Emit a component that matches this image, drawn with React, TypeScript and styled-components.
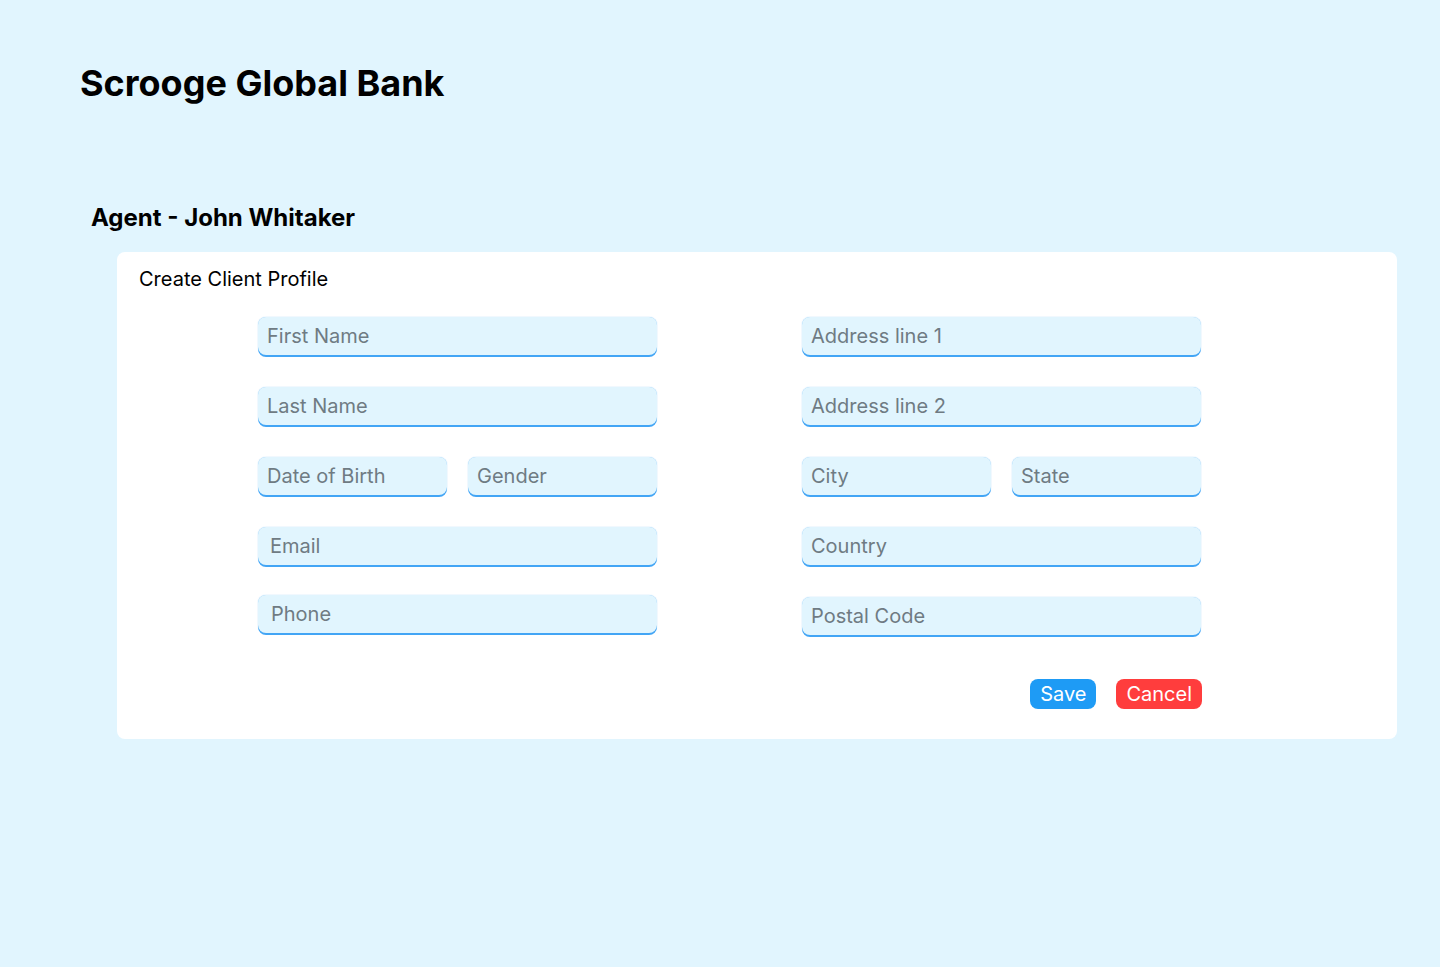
import React from 'react';
import styled, { createGlobalStyle } from 'styled-components';

const GlobalStyle = createGlobalStyle`
	* {
		box-sizing: border-box;
	}
	body {
		margin: 0;
		background: #e1f5fe;
		font-family: Inter, 'Noto Sans', sans-serif;
		color: #000;
	}
`;

const Page = styled.div`
	min-height: 967px;
	padding: 0 43px 0 80px;
`;

const BankTitle = styled.h1`
	font-size: 36px;
	font-weight: 700;
	line-height: 44px;
	margin: 0;
	padding-top: 61px;
`;

const AgentTitle = styled.h2`
	font-size: 24px;
	font-weight: 700;
	line-height: 30px;
	margin: 98px 0 0 11px;
`;

const Card = styled.section`
	background: #fff;
	border-radius: 8px;
	margin: 19px 0 0 37px;
	padding: 15px 22px 30px;
`;

const CardTitle = styled.h3`
	font-size: 20px;
	font-weight: 400;
	line-height: 24px;
	margin: 0;
`;

const FormGrid = styled.div`
	display: grid;
	grid-template-columns: 399px 399px;
	column-gap: 145px;
	margin: 26px 0 0 119px;
`;

const Column = styled.div`
	display: flex;
	flex-direction: column;
	gap: 32px;
`;

const Pair = styled.div`
	display: grid;
	grid-template-columns: 1fr 1fr;
	gap: 21px;
`;

const Field = styled.input<{ $inset?: number; $lift?: number }>`
	width: 100%;
	height: 38px;
	border: none;
	border-radius: 8px;
	background: #e1f5fe;
	box-shadow: 0 2px 0 #42a5f5, 0 0 1px rgba(66, 165, 245, 0.7);
	padding: 0 0 0 ${(p) => p.$inset ?? 9}px;
	margin-top: ${(p) => -(p.$lift ?? 0)}px;
	font-family: Inter, 'Noto Sans', sans-serif;
	font-size: 20px;
	color: #37474f;
	outline: none;
	&::placeholder {
		color: #6f7b83;
	}
`;

const Actions = styled.div`
	display: flex;
	justify-content: flex-end;
	gap: 20px;
	width: 944px;
	margin: 44px 0 0 119px;
`;

const Button = styled.button<{ $tone: 'save' | 'cancel' }>`
	height: 30px;
	border: none;
	border-radius: 8px;
	padding: 0 10px;
	font-family: Inter, 'Noto Sans', sans-serif;
	font-size: 20px;
	line-height: 30px;
	color: #fff;
	background: ${(p) => (p.$tone === 'save' ? '#1e9bf5' : '#ff3d3d')};
	cursor: pointer;
`;

const App: React.FC = () => (
	<>
		<GlobalStyle />
		<Page>
			<BankTitle>Scrooge Global Bank</BankTitle>
			<AgentTitle>Agent - John Whitaker</AgentTitle>
			<Card>
				<CardTitle>Create Client Profile</CardTitle>
				<FormGrid>
					<Column>
						<Field placeholder="First Name" />
						<Field placeholder="Last Name" />
						<Pair>
							<Field placeholder="Date of Birth" />
							<Field placeholder="Gender" />
						</Pair>
						<Field placeholder="Email" $inset={12} />
						<Field placeholder="Phone" $inset={13} $lift={2} />
					</Column>
					<Column>
						<Field placeholder="Address line 1" />
						<Field placeholder="Address line 2" />
						<Pair>
							<Field placeholder="City" />
							<Field placeholder="State" />
						</Pair>
						<Field placeholder="Country" />
						<Field placeholder="Postal Code" />
					</Column>
				</FormGrid>
				<Actions>
					<Button $tone="save">Save</Button>
					<Button $tone="cancel">Cancel</Button>
				</Actions>
			</Card>
		</Page>
	</>
);

export default App;
